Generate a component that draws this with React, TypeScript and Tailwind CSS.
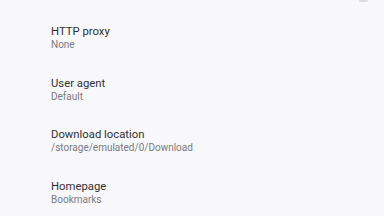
const items = [
  { title: 'HTTP proxy', value: 'None' },
  { title: 'User agent', value: 'Default' },
  { title: 'Download location', value: '/storage/emulated/0/Download' },
  { title: 'Homepage', value: 'Bookmarks' },
];

export default function App() {
  return (
    <div className="relative h-[216px] w-[384px] overflow-hidden bg-[#f8f8fa] font-['Roboto',sans-serif]">
      {/* leftover of the element scrolled above */}
      <div className="absolute left-[359px] top-0 h-[2px] w-[9px] rounded-b-sm bg-[#dcdcdf]" />
      <div className="flex flex-col pt-[25px] pl-[51px]">
        {items.map((item) => (
          <div key={item.title} className="flex h-[51.7px] flex-col">
            <div className="text-[11.3px] leading-[13px] text-[#303033]">{item.title}</div>
            <div className="mt-[1px] text-[10px] leading-[12px] text-[#7a7a7e]">{item.value}</div>
          </div>
        ))}
      </div>
    </div>
  );
}
